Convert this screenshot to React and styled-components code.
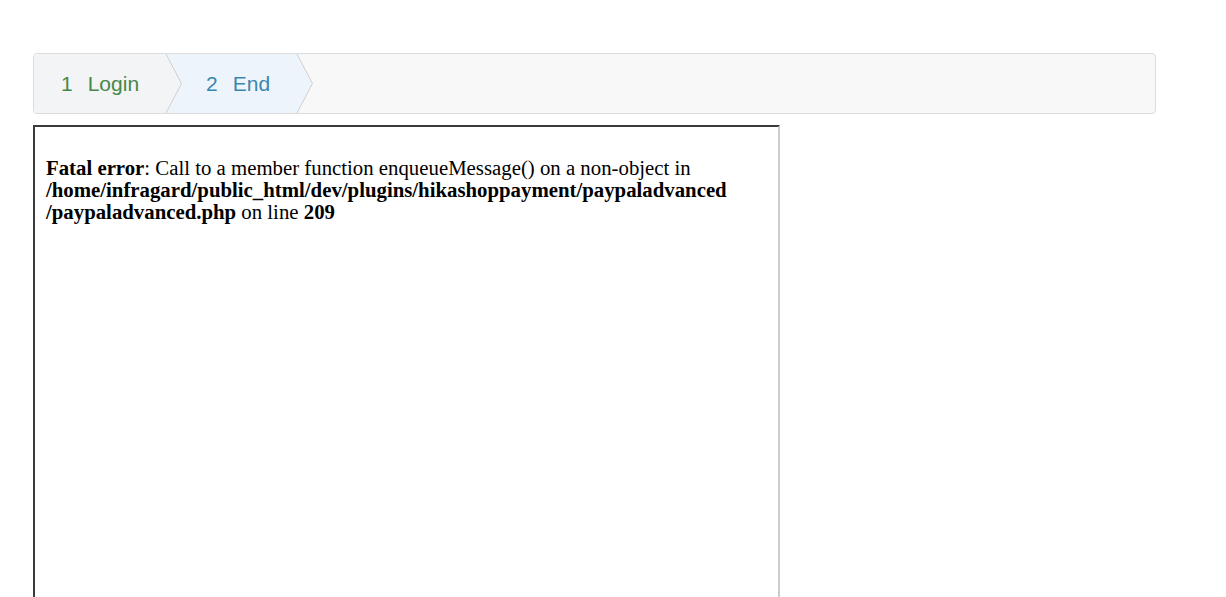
import React from 'react';
import styled, { createGlobalStyle } from 'styled-components';

const GlobalStyle = createGlobalStyle`
  html, body {
    margin: 0;
    padding: 0;
    background: #fff;
    overflow: hidden;
  }
`;

const Page = styled.div`
  padding: 53px 0 0 33px;
  font-family: "Liberation Sans", Arial, sans-serif;
`;

const Wizard = styled.div`
  display: flex;
  align-items: stretch;
  width: 1121px;
  height: 59px;
  background-color: #f8f8f8;
  border: solid 1px #dcdcdc;
  border-radius: 4px;
  overflow: hidden;
`;

const Step = styled.div`
  display: flex;
  align-items: stretch;
`;

const StepLabel = styled.div`
  display: flex;
  align-items: center;
  padding: ${(p) => p.pad};
  background-color: ${(p) => p.bg};
  color: ${(p) => p.color};
  font-size: 21px;
  white-space: nowrap;
`;

const Num = styled.span`
  margin-right: 15px;
`;

const Arrow = ({ bg, next }) => (
  <svg width="17" height="59" viewBox="0 0 17 59" style={{ display: 'block', background: next }}>
    <polygon points="0,0 1,0 16.5,29.5 1,59 0,59" fill={bg} />
    <polyline points="1,0 16.5,29.5 1,59" fill="none" stroke="#cfcfcf" strokeWidth="1" />
  </svg>
);

const Frame = styled.div`
  width: 721px;
  height: 600px;
  margin-top: 11px;
  border-top: solid 2px #3b3b3b;
  border-left: solid 2px #3b3b3b;
  border-right: solid 2px #cdcdcd;
  border-bottom: solid 2px #cdcdcd;
  padding: 8px 11px;
  box-sizing: content-box;
  font-family: "Liberation Serif", "Times New Roman", serif;
  font-size: 20.8px;
  line-height: 22px;
  color: #000;
`;

const ErrorText = styled.p`
  margin: 0;
  white-space: nowrap;
`;

export default function App() {
  return (
    <>
      <GlobalStyle />
      <Page>
        <Wizard>
          <Step>
            <StepLabel bg="#f3f4f6" color="#468847" pad="0 26px 0 27px">
              <Num>1</Num>Login
            </StepLabel>
            <Arrow bg="#f3f4f6" next="#eef4fc" />
          </Step>
          <Step>
            <StepLabel bg="#eef4fc" color="#3a87ad" pad="0 26px 0 24px">
              <Num>2</Num>End
            </StepLabel>
            <Arrow bg="#eef4fc" next="#f8f8f8" />
          </Step>
        </Wizard>
        <Frame>
          <br />
          <ErrorText>
            <b>Fatal error</b>: Call to a member function enqueueMessage() on a non-object in{' '}
            <br />
            <b>/home/infragard/public_html/dev/plugins/hikashoppayment/paypaladvanced</b>
            <br />
            <b>/paypaladvanced.php</b> on line <b>209</b>
          </ErrorText>
        </Frame>
      </Page>
    </>
  );
}
